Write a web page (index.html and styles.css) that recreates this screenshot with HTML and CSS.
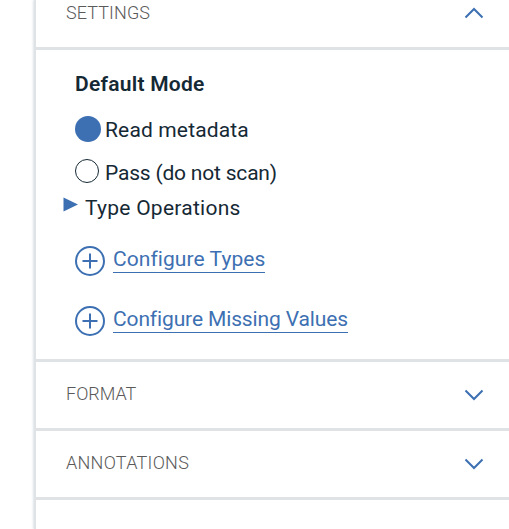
FILE: index.html
```
<!DOCTYPE html>
<html lang="en">
<head>
<meta charset="utf-8">
<title>Node properties</title>
<link rel="stylesheet" href="styles.css">
</head>
<body>
<main class="panel">
  <header class="category first"><span class="settings">SETTINGS</span>
    <svg class="chevron" width="20" height="12" viewBox="0 0 20 12"><path d="M1.5 10.5 10 2l8.500 8.500"/></svg>
  </header>
  <section class="content">
    <h2><span class="mode">Default Mode</span></h2>
    <div class="option"><i class="radio checked"></i><span class="read">Read metadata</span></div>
    <div class="option second"><i class="radio"></i><span class="pass">Pass (do not scan)</span></div>
    <div class="summary"><svg class="arrow" width="15" height="16" viewBox="0 0 15 16"><path d="M0.500 0.500 15 7.500 0.500 14.500Z"/></svg><span class="ops">Type Operations</span></div>
    <div class="action">
      <svg class="plus" width="30" height="30" viewBox="0 0 30 30"><circle cx="15" cy="15" r="14"/><path d="M7.500 15h15M15 7.500v15"/></svg>
      <a class="types">Configure Types</a>
    </div>
    <div class="action">
      <svg class="plus" width="30" height="30" viewBox="0 0 30 30"><circle cx="15" cy="15" r="14"/><path d="M7.500 15h15M15 7.500v15"/></svg>
      <a class="missing">Configure Missing Values</a>
    </div>
  </section>
  <header class="category"><span class="format">FORMAT</span>
    <svg class="chevron" width="20" height="12" viewBox="0 0 20 12"><path d="M1.500 1.500 10 10l8.500-8.500"/></svg>
  </header>
  <header class="category"><span class="annotations">ANNOTATIONS</span>
    <svg class="chevron" width="20" height="12" viewBox="0 0 20 12"><path d="M1.500 1.500 10 10l8.500-8.500"/></svg>
  </header>
</main>
</body>
</html>
```
FILE: styles.css
```
* { box-sizing: border-box; }
body {
  margin: 0;
  height: 529px;
  overflow: hidden;
  background: #fff;
  color: #152935;
  font: 400 21px/30px Roboto, "Open Sans", sans-serif;
}
.panel {
  height: 529px;
  margin-left: 34px;
  border-left: 2px solid #dfe3e6;
  box-shadow: -1px 0 2px #dfe3e6;
  display: flex;
  flex-direction: column;
}
.category {
  flex: none;
  height: 69px;
  padding: 0 25px 0 30px;
  border-bottom: 3px solid #dfe3e6;
  display: flex;
  align-items: center;
  justify-content: space-between;
  color: #5a5a5a;
  font-size: 18px;
  font-weight: 300;
}
.category span { margin-top: -3px; }
.first { margin-top: -19px; }
.settings { letter-spacing: 0.1px; }
.annotations { letter-spacing: 0.27px; }
.chevron { fill: none; stroke: #3d70b2; stroke-width: 2; }
.first .chevron { margin-top: -2px; }
.content {
  flex: none;
  height: 312px;
  padding: 19px 0 0 39px;
  border-bottom: 3px solid #dfe3e6;
}
h2 { margin: 0; font-size: 21px; font-weight: 600; line-height: 30px; letter-spacing: 0.25px; }
.option { height: 30px; margin-top: 15px; display: flex; align-items: center; }
.option.second { margin-top: 13px; }
.option span, .summary span { padding-top: 2px; }
.read { letter-spacing: 0.15px; }
.pass { letter-spacing: -0.2px; }
.ops { letter-spacing: 0.26px; }
.types { letter-spacing: 0.07px; }
.missing { letter-spacing: -0.13px; }
.radio { width: 24px; height: 24px; border: 1px solid #152935; border-radius: 50%; margin: 0 6px 3px 0; }
.checked { width: 26px; height: 26px; border: 0; background: #3d70b2; margin: 0 4px 1px 0; }
.summary { height: 30px; margin: 5px 0 0 -12px; display: flex; align-items: center; }
.arrow { fill: #3d70b2; margin: 0 7px 5px 0; }
.action { height: 30px; margin-top: 24px; display: flex; gap: 8px; }
.action + .action { margin-top: 30px; }
.plus { fill: none; stroke: #3d70b2; stroke-width: 2; }
.action a { height: 27px; line-height: 26px; border-bottom: 1px solid #3d70b2; color: #3d70b2; }
span, a { white-space: nowrap; }
```
